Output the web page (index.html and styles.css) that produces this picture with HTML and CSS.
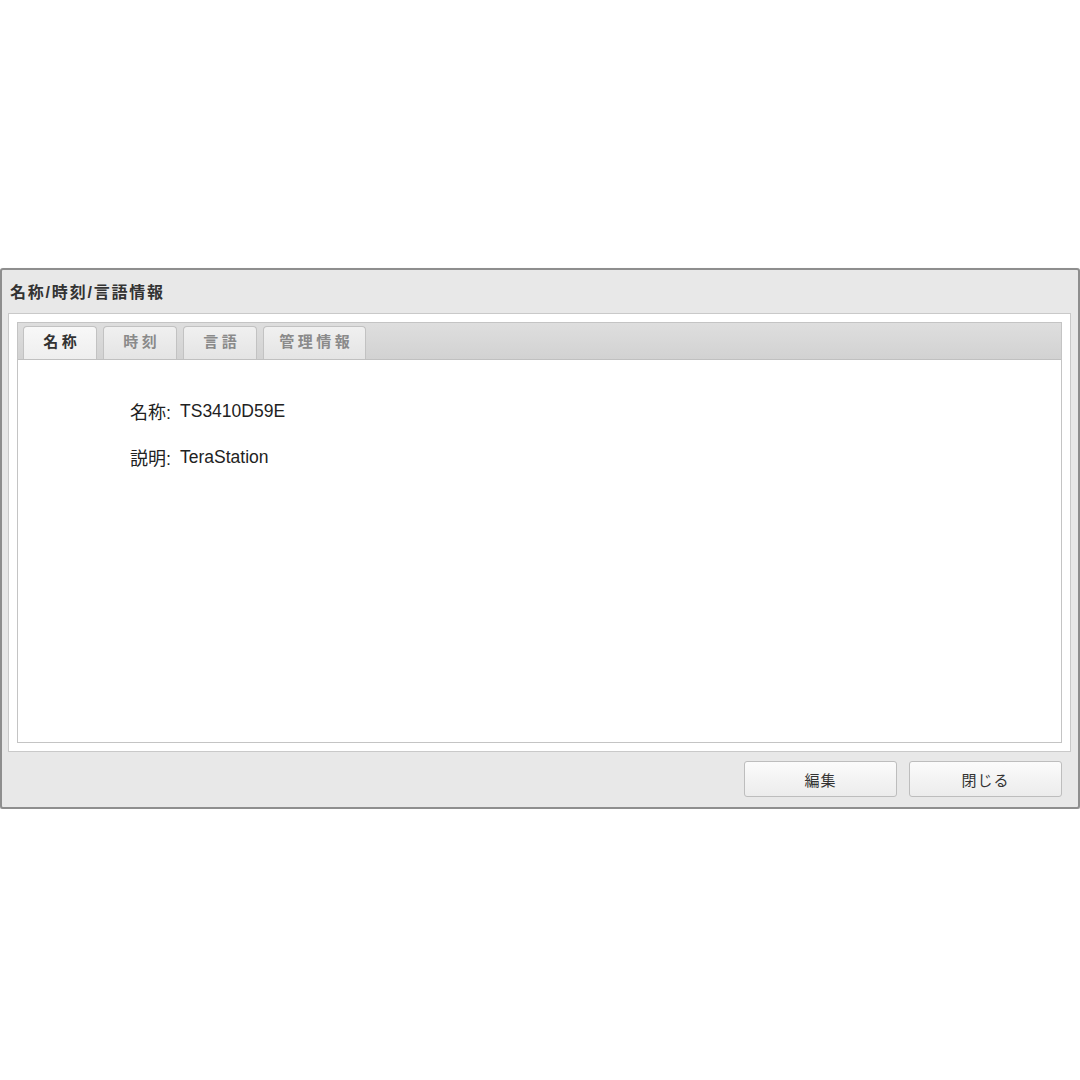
FILE: index.html
```html
<!DOCTYPE html>
<html lang="ja">
<head>
<meta charset="utf-8">
<link rel="stylesheet" href="styles.css">
</head>
<body>
<div class="dialog">
  <div class="title">名称/時刻/言語情報</div>
  <div class="panel">
    <div class="tabbox">
      <div class="tabstrip">
        <div class="tab active">名称</div>
        <div class="tab">時刻</div>
        <div class="tab">言語</div>
        <div class="tab wide">管理情報</div>
      </div>
      <div class="content">
        <div class="row"><span class="label">名称:</span><span class="value">TS3410D59E</span></div>
        <div class="row"><span class="label">説明:</span><span class="value">TeraStation</span></div>
      </div>
    </div>
  </div>
  <div class="footer">
    <button class="btn">編集</button>
    <button class="btn">閉じる</button>
  </div>
</div>
</body>
</html>
```

FILE: styles.css
```css
html, body {
  margin: 0;
  padding: 0;
  background: #ffffff;
}
body {
  font-family: "Liberation Sans", "Noto Sans CJK JP", sans-serif;
  color: #222;
}
.dialog {
  margin-top: 268px;
  height: 541px;
  box-sizing: border-box;
  border: 2px solid #8e8e8e;
  border-radius: 3px;
  background: #e8e8e8;
  display: flex;
  flex-direction: column;
  box-shadow: 0 1px 2px rgba(0,0,0,0.25);
}
.title {
  height: 43px;
  line-height: 46px;
  padding-left: 8px;
  font-size: 16px;
  font-weight: bold;
  letter-spacing: 1.8px;
  color: #333;
}
.panel {
  margin: 0 7px 0 6px;
  border: 1px solid #c9c9c9;
  background: #ffffff;
  padding: 8px;
  height: 439px;
  box-sizing: border-box;
  display: flex;
}
.tabbox {
  flex: 1;
  display: flex;
  flex-direction: column;
  border: 1px solid #c4c4c4;
}
.tabstrip {
  height: 37px;
  box-sizing: border-box;
  background: linear-gradient(#dedede, #d2d2d2);
  border-bottom: 1px solid #c0c0c0;
  display: flex;
  align-items: flex-end;
  gap: 6px;
  padding-left: 5px;
}
.tab {
  width: 74px;
  height: 33px;
  box-sizing: border-box;
  border: 1px solid #c2c2c2;
  border-bottom: none;
  border-radius: 4px 4px 0 0;
  background: linear-gradient(#f0f0f0, #e4e4e4);
  color: #8a8a8a;
  font-size: 15px;
  font-weight: bold;
  letter-spacing: 3.5px;
  text-indent: 3.5px;
  text-align: center;
  line-height: 30px;
}
.tab.active {
  background: linear-gradient(#f8f8f8, #eeeeee);
  color: #333;
}
.tab.wide {
  width: 103px;
}
.content {
  flex: 1;
  background: #ffffff;
  padding-top: 36px;
  padding-left: 112px;
}
.row {
  height: 46px;
  display: flex;
  align-items: baseline;
  font-size: 17.5px;
  color: #222;
}
.label {
  font-size: 18px;
  margin-right: 9px;
  position: relative;
  top: 2px;
}
.footer {
  flex: 1;
  display: flex;
  justify-content: flex-end;
  align-items: flex-start;
  gap: 12px;
  padding: 9px 16px 0 0;
}
.btn {
  width: 153px;
  height: 36px;
  border: 1px solid #bdbdbd;
  border-radius: 3px;
  background: linear-gradient(#fbfbfb, #ececec);
  font-family: "Liberation Sans", "Noto Sans CJK JP", sans-serif;
  font-size: 15px;
  color: #333;
  letter-spacing: 1px;
  padding: 0;
}
```
